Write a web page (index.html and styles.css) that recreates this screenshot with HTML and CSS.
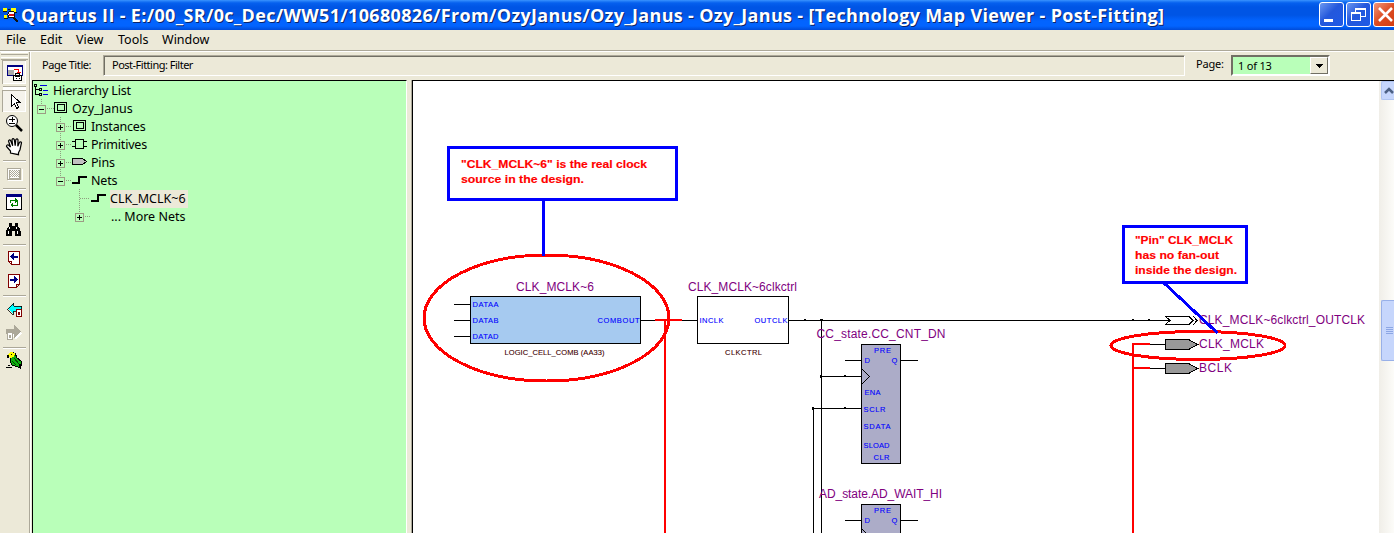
FILE: index.html
```html
<!DOCTYPE html>
<html lang="en">
<head>
<meta charset="utf-8">
<title>Quartus II</title>
<link rel="stylesheet" href="styles.css">
</head>
<body>
<header class="titlebar">
  <svg class="app-icon" width="18" height="20" viewBox="2 5 18 20" shape-rendering="crispEdges">
    <path fill="#ffff00" d="M3 8h4v3H3zM11 8h5v4h-5zM4 15h3v3H4z"/>
    <path fill="#111" d="M3 11h4v1H3zM8 9h2v1H8zM4 18h4v1H4zM15 12h2v1h-2z"/>
    <circle cx="11.500" cy="14.500" r="3.500" fill="#fff" stroke="#111"/>
    <path stroke="#e01010" stroke-width="1.500" d="M9 15h5"/>
    <path stroke="#111" stroke-width="2" d="M14 18l4 4"/>
  </svg>
  <h1 class="title">Quartus II - E:/00_SR/0c_Dec/WW51/10680826/From/OzyJanus/Ozy_Janus - Ozy_Janus - [Technology Map Viewer - Post-Fitting]</h1>
  <div class="window-buttons">
    <span class="wbtn"><svg width="23" height="23"><path fill="#fff" d="M4 16h9v3H4z"/></svg></span>
    <span class="wbtn"><svg width="23" height="23" fill="none" stroke="#fff" shape-rendering="crispEdges"><path d="M8 9V5h10v8h-4M8 6h10"/><path d="M4 9.500h9v8H4zM4 10.500h9"/></svg></span>
    <span class="wbtn close"><svg width="23" height="23"><path stroke="#fff" stroke-width="2.600" d="M5 5l13 13M18 5L5 18"/></svg></span>
  </div>
</header>
<nav class="menu"><span class="m-file">File</span><span class="m-edit">Edit</span><span class="m-view">View</span><span class="m-tools">Tools</span><span class="m-window">Window</span></nav>
<main class="workspace">
  <aside class="toolbar">
    <div class="grip"></div>
    <div class="tool on"><svg width="24" height="24" viewBox="2 60 24 24" shape-rendering="crispEdges">
      <path fill="#fff" stroke="#000080" d="M7.500 65.500h15v10h-15z"/><path fill="#000080" d="M7 65h16v2H7z"/>
      <path fill="#aaa" d="M8 70h6v5H8z"/><path fill="none" stroke="#f00" d="M14 69.500h4.500v4M16.500 72.500h4"/>
      <path fill="#fff" stroke="#000" d="M13.500 75.500h8v5h-8zM15.500 73.500h4v3h-4z"/><path stroke="#000" d="M16 78h1M19 78h1"/></svg></div>
    <div class="sep big"></div>
    <div class="tool on pointer"><svg width="24" height="22" viewBox="2 90 24 22" shape-rendering="crispEdges"><path fill="#fff" stroke="#000" d="M11.500 94.500v12l3-3 2 5 2-1-2-5h3.500z"/></svg></div>
    <div class="tool"><svg width="24" height="22" viewBox="2 112 24 22"><circle cx="12" cy="121" r="5.500" fill="#fff" stroke="#000"/><path stroke="#000" shape-rendering="crispEdges" d="M9 119.500h6M12.500 117v5M9 123.500h6"/><path stroke="#000" stroke-width="2.500" d="M16 125l6 6"/></svg></div>
    <div class="tool hand"><svg width="24" height="24" viewBox="2 134 24 24"><path fill="#fff" stroke="#000" stroke-width="1.200" d="M10.500 153v-2l-4-4.500q0-2 2-1.500l2 2-2-6q1-2 2.200-.3l2 5-.7-6q1-2 2.300 0l.9 6 .6-6q1.300-1.500 2.200 0l-.2 6.500 1.700-4q1.600-1 2 .5l-1.500 7-1.500 3v2z"/></svg></div>
    <div class="sep"></div>
    <div class="tool"><svg width="24" height="24" viewBox="2 162 24 24" shape-rendering="crispEdges"><path fill="#fff" stroke="#aca899" d="M7.500 168.500h13v11h-13z"/><path stroke="#aca899" stroke-dasharray="1 1" d="M10 170.500h9M10 172.500h9M10 174.500h9M10 176.500h9M11 171.500h8M11 173.500h8M11 175.500h8"/><path fill="none" stroke="#aca899" d="M9.500 170v8h10v-8"/><path fill="none" stroke="#fff" d="M8 180.500h14v-12"/></svg></div>
    <div class="sep"></div>
    <div class="tool"><svg width="24" height="24" viewBox="2 190 24 24" shape-rendering="crispEdges"><path fill="#fff" stroke="#000" d="M6.500 194.500h15v15h-15z"/><path fill="#000080" d="M6 194h16v3H6z"/><path fill="none" stroke="#008000" d="M10.500 203v-3h6M17.500 201v4h-6"/><path fill="#008000" d="M15 198l3 2.500-3 2.500zM13 202l-3 3 3 3z"/></svg></div>
    <div class="sep"></div>
    <div class="tool"><svg width="24" height="24" viewBox="2 218 24 24" shape-rendering="crispEdges"><path fill="#000" d="M9 223h3v3h3v-3h3v3l2 3 1 3v4h-6v-5h-3v5H6v-4l1-3 2-3z"/><path stroke="#fff" d="M9.500 227v2M8.500 231v3M16.500 227v2M17.500 231v3"/></svg></div>
    <div class="sep"></div>
    <div class="tool"><svg width="24" height="24" viewBox="2 246 24 24" shape-rendering="crispEdges"><path fill="#fff" stroke="#800000" d="M8.500 251.500h11v13h-8l-3-3zM8.500 261.500h3v3"/><path fill="#000080" d="M10 256.500l4-4v3h4v2h-4v3z"/></svg></div>
    <div class="tool next"><svg width="24" height="23" viewBox="2 270 24 23" shape-rendering="crispEdges"><path fill="#fff" stroke="#800000" d="M8.500 274.500h11v10l-3 3h-8zM19.500 284.500h-3v3"/><path fill="#000080" d="M18 279.500l-4-4v3h-4v2h4v3z"/></svg></div>
    <div class="sep"></div>
    <div class="tool back"><svg width="24" height="25" viewBox="2 297 24 25" shape-rendering="crispEdges"><path fill="#00ffff" stroke="#000" stroke-width=".8" d="M7.500 308.500l6-6v3.500h8v5h-8v3.500z"/><path fill="#fff" stroke="#800000" d="M16.500 309.500h5v7h-5z"/><path stroke="#800000" fill="none" d="M18.500 312.500h1v2h-1z"/></svg></div>
    <div class="tool next"><svg width="24" height="23" viewBox="2 322 24 23" shape-rendering="crispEdges"><path fill="#fff" d="M8 332h8v-4l6 6-6 5z"/><path fill="#aca899" d="M6 329h8v-4l7 7-7 6v-4H6z"/><path fill="#fff" stroke="#aca899" d="M7.500 332.500h5v7h-5z"/><path fill="none" stroke="#aca899" d="M9.500 335.500h1v2h-1z"/></svg></div>
    <div class="sep"></div>
    <div class="tool next"><svg width="24" height="23" viewBox="2 349 24 23" shape-rendering="crispEdges"><path fill="#10b010" stroke="#000" d="M10.500 354.500l2-2 3 1 1 4 5 4v4l-2-1 1 4-3-2-5-1-2-3z"/><path fill="#ffff00" d="M8 354l3-2 4 1-1 4-4 1z"/><path fill="#000" d="M7 355h2v3H7zM11 354h1v1h-1z"/><path stroke="#004800" d="M14 358l5 6M12 361l4 4"/><path stroke="#000" d="M6 367.500h6M8 365.500h2"/></svg></div>
  </aside>
  <section class="content">
    <div class="pagebar">
      <span class="page-title">Page Title:</span>
      <div class="title-field">Post-Fitting: Filter</div>
      <span class="page-label">Page:</span>
      <div class="select"><span class="page-value">1 of 13</span><span class="drop"><svg width="16" height="15" shape-rendering="crispEdges"><path d="M5 6h7l-3.500 4z"/></svg></span></div>
    </div>
    <div class="panes">
      <div class="tree">
        <svg class="tree-lines" width="160" height="145" viewBox="33 81 160 145" fill="none" shape-rendering="crispEdges">
          <g stroke="#8f9f80" stroke-dasharray="1 1">
            <path d="M41.500 99v5M47 108.500h7M60.500 117v5M60.500 131v9M60.500 149v9M60.500 167v9M66 126.500h6M66 144.500h6M66 162.500h6M66 180.500h6M79.500 189v23M80 198.500h10M85 216.500h5"/>
          </g>
          <g stroke="#9c9c84"><path d="M37.500 105.500h8v8h-8zM56.500 123.500h8v8h-8zM56.500 141.500h8v8h-8zM56.500 159.500h8v8h-8zM56.500 177.500h8v8h-8zM75.500 213.500h8v8h-8z"/></g>
          <g stroke="#000"><path d="M39 109.500h5M58 127.500h5M60.500 125v5M58 145.500h5M60.500 143v5M58 163.500h5M60.500 161v5M58 181.500h5M77 217.500h5M79.500 215v5"/>
            <path d="M34.500 84.500h2v2h-2zM39.500 88.500h2v2h-2zM39.500 93.500h2v2h-2zM35.500 87v7.500h4M35.500 89.500h4"/>
            <path d="M54.500 102.500h12v10h-12zM57.500 104.500h7v6h-7zM73.500 120.500h12v10h-12zM76.500 122.500h7v6h-7zM75.500 139.500h8v9h-8zM72 141.500h3M72 146.500h3M84 141.500h3M84 146.500h3"/>
            <path fill="#c0c0c0" d="M72.500 158.500h10l4 3-4 3h-10z"/>
            <path stroke-width="2" d="M72 183h7v-6h8M91 201h7v-6h8"/></g>
          <path stroke="#0000e0" d="M40 85.500h7M43 90.500h5M43 94.500h5"/>
        </svg>
        <ul class="nodes">
          <li class="l0"><span>Hierarchy List</span></li>
          <li class="l1"><span>Ozy_Janus</span></li>
          <li class="l2 inst"><span>Instances</span></li>
          <li class="l2 prim"><span>Primitives</span></li>
          <li class="l2 pins"><span>Pins</span></li>
          <li class="l2 nets"><span>Nets</span></li>
          <li class="l3"><span class="selected">CLK_MCLK~6</span></li>
          <li class="l3 more"><span>... More Nets</span></li>
        </ul>
      </div>
      <div class="canvas">
        <svg class="schematic" width="966" height="452" viewBox="413 81 966 452">
          <g stroke="#000" fill="none" shape-rendering="crispEdges">
            <path d="M454 304.500h16M454 320.500h16M454 336.500h16M640 320.500h57M789 320.500h381M821.500 320v213M813.500 408v125M822 376.500h39M813 408.500h48M845 360.500h16M901 360.500h17M845 520.500h16M901 520.500h17M1133 344.500h33M1133 368.500h33"/>
            <path fill="#a6caf0" d="M470.500 296.500h170v47h-170z"/>
            <path fill="#fff" d="M697.500 296.500h91v47h-91z"/>
            <path fill="#acacc8" d="M861.500 344.500h39v119h-39zM861.500 504.500h39v40h-39z"/>
            <path d="M862 369l7.500 7.500-7.500 7.500M862 529l7 7"/>
            <path fill="#fff" d="M1165.500 316.500h23l4.500 4-4.500 4h-23l4.500-4z"/><path d="M1189 316l4 4.500-4 4.500M1193 316l4 4.500-4 4.500"/>
            <path fill="#999" d="M1165.500 339.500h23l9 5-9 5h-23zM1165.500 363.500h23l9 5-9 5h-23z"/>
          </g>
          <path d="M804 319h2v2h-2zM820 319h3v2h-3zM820 375h2v3h-2zM844 375h2v2h-2zM812 407h2v3h-2zM844 407h2v2h-2zM1132 319h2v2h-2zM1148 319h2v2h-2z"/>
          <g class="pin-names">
            <text x="472.500" y="306.500" textLength="26">DATAA</text><text x="472.500" y="322.500" textLength="26">DATAB</text><text x="472.500" y="338.500" textLength="26">DATAD</text>
            <text x="597.500" y="322.500" textLength="42">COMBOUT</text><text x="699.500" y="322.500" textLength="24">INCLK</text><text x="754.500" y="322.500" textLength="33">OUTCLK</text>
            <text x="874" y="352.500" textLength="17">PRE</text><text x="864.500" y="362.500">D</text><text x="891.500" y="362.500">Q</text>
            <text x="864.500" y="394.500" textLength="16">ENA</text><text x="863.500" y="411.500" textLength="22">SCLR</text><text x="863.500" y="428.500" textLength="27">SDATA</text><text x="863.500" y="447.500" textLength="26">SLOAD</text><text x="873.500" y="459.500" textLength="16">CLR</text>
            <text x="874" y="512.500" textLength="17">PRE</text><text x="864.500" y="522.500">D</text><text x="891.500" y="522.500">Q</text>
          </g>
          <g class="type-names"><text x="504.500" y="354.500" textLength="100">LOGIC_CELL_COMB (AA33)</text><text x="725" y="354.500" textLength="37">CLKCTRL</text></g>
          <g class="names">
            <text x="516" y="291" textLength="78">CLK_MCLK~6</text><text x="688" y="291" textLength="109">CLK_MCLK~6clkctrl</text>
            <text x="816.500" y="338" textLength="129">CC_state.CC_CNT_DN</text><text x="819" y="498" textLength="123">AD_state.AD_WAIT_HI</text>
            <text x="1199" y="324" textLength="166">CLK_MCLK~6clkctrl_OUTCLK</text><text x="1199" y="348" textLength="65">CLK_MCLK</text><text x="1199" y="372" textLength="33">BCLK</text>
          </g>
          <g stroke="#f00" stroke-width="2" fill="none" shape-rendering="crispEdges"><path d="M655 320h27M665 319v214M1133 343v190M1132 344h18M1132 368h18"/></g>
          <g stroke="#f00" stroke-width="3" fill="none" shape-rendering="crispEdges"><ellipse cx="546.500" cy="318" rx="122.500" ry="63"/><ellipse cx="1198" cy="345.500" rx="87" ry="14"/></g>
          <g stroke="#00f" stroke-width="3" fill="#fff" shape-rendering="crispEdges"><path d="M543.500 200v55.500M1164 283l53.500 50"/><path d="M448.500 147.500h228v52h-228zM1123.500 226.500h123v56h-123z"/></g>
          <g class="notes">
            <text x="461" y="168" textLength="186" lengthAdjust="spacingAndGlyphs">"CLK_MCLK~6" is the real clock</text><text x="461" y="183" textLength="123" lengthAdjust="spacingAndGlyphs">source in the design.</text>
            <text x="1135" y="244" textLength="98" lengthAdjust="spacingAndGlyphs">"Pin" CLK_MCLK</text><text x="1135" y="259" textLength="84" lengthAdjust="spacingAndGlyphs">has no fan-out</text><text x="1135" y="274" textLength="102" lengthAdjust="spacingAndGlyphs">inside the design.</text>
          </g>
        </svg>
        <div class="scrollbar">
          <div class="scroll-up"><svg width="14" height="16"><path fill="none" stroke="#4d6185" stroke-width="2.500" d="M3 11l4-4 4 4"/></svg></div>
          <div class="thumb"><i></i><i></i><i></i><i></i></div>
        </div>
      </div>
    </div>
  </section>
</main>
</body>
</html>
```
FILE: styles.css
```css
* { box-sizing: border-box; }
body { margin: 0; width: 1394px; height: 533px; overflow: hidden; background: #ece9d8; color: #000; font: 12px "Noto Sans", sans-serif; display: flex; flex-direction: column; }
svg { display: block; flex: none; }
.titlebar { height: 30px; flex: none; display: flex; align-items: center; padding-left: 2px; background: linear-gradient(#3d95ff 0, #2580f8 1px, #0660ee 3px, #0055e5 7px, #0055e5 15px, #0264ff 21px, #0264ff 26px, #004bd8 30px); }
.title { margin: 0 0 0 1px; flex: 1; color: #fff; font: bold 18px/30px "Open Sans", sans-serif; letter-spacing: .33px; white-space: nowrap; text-shadow: 1px 1px #0a246a; }
.window-buttons { display: flex; gap: 2px; align-self: flex-start; padding-top: 2px; width: 75px; overflow: hidden; }
.wbtn { width: 25px; height: 25px; flex: none; border: 1px solid #fff; border-radius: 3px; background: linear-gradient(135deg, #6c98f0, #2458dc 45%, #1f5ae6); }
.wbtn.close { background: linear-gradient(135deg, #f0967a, #dc4a20 50%, #d03c10); }
.menu { height: 21px; flex: none; display: flex; line-height: 20px; border-bottom: 1px solid #aca899; font-size: 12.500px; }
.menu span { flex: none; }
.m-file { margin-left: 6px; width: 34px; }
.m-edit { width: 36px; }
.m-view { width: 42px; }
.m-tools { width: 44px; }
.workspace { flex: 1; display: flex; border-top: 1px solid #fff; min-height: 0; }
.toolbar { width: 30px; flex: none; padding-left: 1px; border-right: 1px solid #aca899; display: flex; flex-direction: column; }
.grip { height: 8px; width: 27px; border-top: 1px solid #fff; border-bottom: 1px solid #aca899; background: linear-gradient(#ece9d8 1px, #aca899 1px 2px, #ece9d8 2px 4px, #fff 4px 5px, #ece9d8 5px); }
.tool { height: 24px; flex: none; margin-left: 1px; width: 24px; }
.tool.on { background: #f5f3ec; box-shadow: inset 1px 1px #aca899, inset -1px -1px #fff; }
.tool.pointer { height: 22px; }
.tool.pointer + .tool { height: 22px; }
.tool.next { height: 23px; }
.tool.back { height: 25px; }
.sep { height: 4px; flex: none; margin-left: 2px; width: 23px; background: linear-gradient(transparent 2px, #aca899 2px 3px, #fff 3px); }
.sep.big { height: 6px; }
.content { flex: 1; min-width: 0; display: flex; flex-direction: column; padding-left: 2px; border-left: 1px solid #fff; }
.pagebar { height: 28px; flex: none; display: flex; align-items: flex-start; font-size: 11px; line-height: 25px; letter-spacing: -.4px; }
.page-title { width: 61px; margin-left: 9px; flex: none; }
.title-field { width: 1082px; height: 21px; margin-top: 3px; padding-left: 8px; line-height: 18px; letter-spacing: -.5px; border: 1px solid; border-color: #aca899 #fff #fff #aca899; box-shadow: inset 1px 1px #716f64; flex: none; }
.page-label { margin-left: 11px; width: 35px; flex: none; line-height: 24px; letter-spacing: -.2px; }
.select { width: 99px; height: 21px; margin-top: 3px; display: flex; background: #b9ffb9; border: 2px solid; border-color: #716f64 #fff #fff #716f64; line-height: 18px; padding-left: 5px; letter-spacing: -.2px; justify-content: space-between; }
.drop { width: 18px; height: 17px; background: #ece9d8; border: 1px solid; border-color: #fff #716f64 #716f64 #fff; }
.panes { flex: 1; display: flex; min-height: 0; }
.tree { width: 375px; flex: none; background: #b9ffb9; border: solid #000; border-width: 1px 0 0 1px; border-right: 1px solid #fff; position: relative; margin-left: -1px; }
.tree-lines { position: absolute; left: 0; top: 0; }
.nodes { list-style: none; margin: 0; padding: 1px 0 0; position: relative; font-size: 12.500px; }
.nodes li { height: 18px; line-height: 18px; white-space: nowrap; }
.nodes span { display: inline-block; height: 18px; }
.l0 { padding-left: 20px; letter-spacing: -.15px; }
.l1 { padding-left: 39px; }
.l2 { padding-left: 58px; letter-spacing: -.2px; }
.l3 { padding-left: 77px; }
.more { padding-left: 78px; }
.selected { background: #ece9d8; width: 78px; }
.canvas { flex: 1; min-width: 0; display: flex; background: #fff; border: solid #000; border-width: 1px 0 0 1px; margin-left: 5px; box-shadow: -1px 0 #aca899; }
.schematic { flex: none; font-family: "Liberation Sans", sans-serif; }
.pin-names { fill: #00f; font-size: 7.500px; stroke: #00f; stroke-width: .1px; }
.type-names { fill: #400000; font-size: 7.500px; stroke: #400000; stroke-width: .1px; }
.names { fill: #800080; font-size: 12px; }
.notes { fill: #f00; font-weight: bold; font-size: 11px; stroke: #f00; stroke-width: .15px; }
.scrollbar { flex: 1; background: linear-gradient(90deg, #f0eee8, #fefefb); padding-left: 2px; display: flex; flex-direction: column; gap: 200px; }
.scroll-up { height: 19px; border: 1px solid #b0c4f0; border-width: 1px 0 1px 1px; background: #c6d6fc; border-radius: 2px 0 0 2px; }
.thumb { height: 61px; border: 1px solid #98b0e8; border-width: 1px 0 1px 1px; border-radius: 2px 0 0 2px; background: #c6d6fc; padding: 26px 0 0 4px; display: flex; flex-direction: column; gap: 1px; }
.thumb i { width: 7px; height: 1px; background: #8ca6e4; }
```
